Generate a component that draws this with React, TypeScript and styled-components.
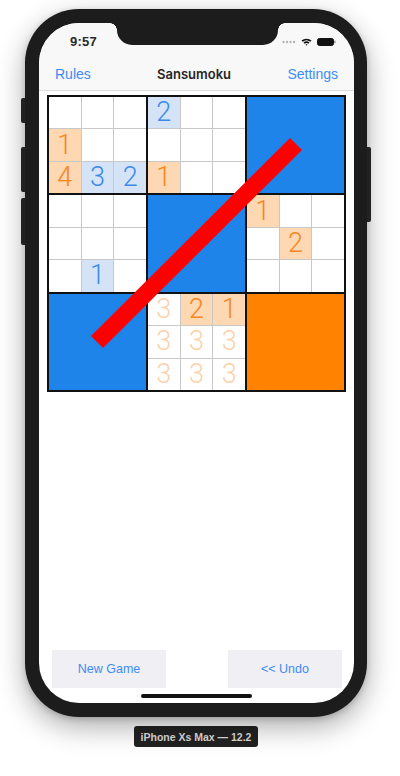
import React from 'react';
import styled, { createGlobalStyle } from 'styled-components';

const GlobalStyle = createGlobalStyle`
  html, body {
    margin: 0;
    padding: 0;
    background: #ffffff;
    font-family: "Liberation Sans", "Noto Sans", Arial, sans-serif;
  }
`;

const Stage = styled.div`
  width: 400px;
  height: 776px;
  padding: 9px 0 0 25px;
  box-sizing: border-box;
  overflow: hidden;
`;

const Device = styled.div`
  width: 342px;
  display: flex;
  flex-direction: column;
  align-items: center;
`;

const Phone = styled.div`
  position: relative;
  width: 342px;
  height: 708px;
  box-sizing: border-box;
  padding: 14px 13px 14px 14px;
  background: #1c1c1c;
  border-radius: 54px;
  box-shadow: 0 10px 28px rgba(0, 0, 0, 0.32), 0 2px 6px rgba(0, 0, 0, 0.18);
`;

const SideButton = styled.div<{ $side: 'left' | 'right'; $top: number; $height: number }>`
  position: absolute;
  top: ${p => p.$top}px;
  height: ${p => p.$height}px;
  width: 4px;
  background: #222;
  ${p => (p.$side === 'left' ? 'left: -4px; border-radius: 2px 0 0 2px;' : 'right: -4px; border-radius: 0 2px 2px 0;')}
`;

const Screen = styled.div`
  position: relative;
  width: 100%;
  height: 100%;
  border-radius: 40px;
  overflow: hidden;
  background: #ffffff;
  display: flex;
  flex-direction: column;
`;

const Notch = styled.div`
  position: absolute;
  top: 0;
  left: 78px;
  width: 161px;
  height: 22px;
  background: #1c1c1c;
  border-radius: 0 0 15px 15px;

  &::before,
  &::after {
    content: '';
    position: absolute;
    top: 0;
    width: 7px;
    height: 7px;
  }
  &::before {
    left: -7px;
    background: radial-gradient(circle at 0 100%, transparent 6.5px, #1c1c1c 7px);
  }
  &::after {
    right: -7px;
    background: radial-gradient(circle at 100% 100%, transparent 6.5px, #1c1c1c 7px);
  }
`;

const Header = styled.div`
  background: #f8f8f8;
  border-bottom: 1px solid #dedede;
  height: 67px;
  display: flex;
  flex-direction: column;
`;

const StatusBar = styled.div`
  height: 36px;
  display: flex;
  align-items: center;
  justify-content: space-between;
  padding: 0 18px 0 31px;
  box-sizing: border-box;
`;

const Clock = styled.span`
  font-size: 13px;
  font-weight: 700;
  color: #2a2a2a;
  letter-spacing: 0.2px;
`;

const StatusIcons = styled.div`
  display: flex;
  align-items: center;
  gap: 5px;
  padding-top: 2px;
`;

const NavBar = styled.div`
  flex: 1;
  display: flex;
  align-items: center;
  justify-content: space-between;
  padding: 0 16px 2px 16px;
`;

const NavLink = styled.span`
  font-size: 14px;
  color: #3d8cf5;
`;

const NavTitle = styled.span`
  font-family: Inter, "Noto Sans", sans-serif;
  font-size: 13px;
  font-weight: 600;
  color: #262626;
  margin-left: 10px;
`;

const Board = styled.div`
  position: relative;
  margin: 4px 0 0 8px;
  width: 299px;
  height: 297px;
  box-sizing: border-box;
  padding: 2px;
  background: #111;
  display: grid;
  grid-template-columns: repeat(3, 1fr);
  grid-template-rows: repeat(3, 1fr);
  gap: 2px;
`;

const Block = styled.div<{ $fill?: string }>`
  background: ${p => p.$fill || '#c8c8c8'};
  display: grid;
  grid-template-columns: repeat(3, 1fr);
  grid-template-rows: repeat(3, 1fr);
  gap: 1px;
`;

type Tone = 'none' | 'orange' | 'blue' | 'faint';

const cellBg: Record<Tone, string> = {
  none: '#ffffff',
  orange: '#fed8b3',
  blue: '#d4e4f6',
  faint: '#ffffff',
};

const cellInk: Record<Tone, string> = {
  none: '#000',
  orange: '#f7861d',
  blue: '#3c8ae9',
  faint: '#fdd1aa',
};

const Cell = styled.div<{ $tone: Tone }>`
  background: ${p => cellBg[p.$tone]};
  color: ${p => cellInk[p.$tone]};
  display: flex;
  align-items: center;
  justify-content: center;
  font-family: Roboto, "Open Sans", sans-serif;
  font-weight: 300;
  font-size: 27px;
  line-height: 1;
`;

const Slash = styled.svg`
  position: absolute;
  left: 0;
  top: 0;
  pointer-events: none;
`;

const Spacer = styled.div`
  flex: 1;
`;

const Footer = styled.div`
  display: flex;
  flex-direction: column;
  align-items: center;
  padding-bottom: 5px;
`;

const ButtonRow = styled.div`
  width: 100%;
  box-sizing: border-box;
  display: flex;
  justify-content: space-between;
  padding: 0 12px 0 13px;
`;

const ActionButton = styled.div`
  width: 114px;
  height: 38px;
  background: #efeff4;
  color: #3d8cf5;
  font-size: 12.5px;
  display: flex;
  align-items: center;
  justify-content: center;
`;

const HomeIndicator = styled.div`
  margin-top: 6px;
  width: 111px;
  height: 4px;
  border-radius: 2px;
  background: #111;
`;

const DeviceLabel = styled.div`
  margin-top: 9px;
  height: 21px;
  padding: 0 7px;
  display: flex;
  align-items: center;
  background: #222;
  border-radius: 3px;
  color: #dcdcdc;
  font-size: 10.5px;
  font-weight: 700;
`;

type CellSpec = [Tone, string];
const E: CellSpec = ['none', ''];

const blocks: (CellSpec[] | string)[] = [
  [E, E, E, ['orange', '1'], E, E, ['orange', '4'], ['blue', '3'], ['blue', '2']],
  [['blue', '2'], E, E, E, E, E, ['orange', '1'], E, E],
  '#1f84ea',
  [E, E, E, E, E, E, E, ['blue', '1'], E],
  '#1f84ea',
  [['orange', '1'], E, E, E, ['orange', '2'], E, E, E, E],
  '#1f84ea',
  [
    ['faint', '3'], ['orange', '2'], ['orange', '1'],
    ['faint', '3'], ['faint', '3'], ['faint', '3'],
    ['faint', '3'], ['faint', '3'], ['faint', '3'],
  ],
  '#ff8300',
];

const Dots = () => (
  <svg width="14" height="4" viewBox="0 0 14 4">
    {[1.5, 5, 8.5, 12].map(x => (
      <circle key={x} cx={x} cy="2" r="1.2" fill="#b5b5b5" />
    ))}
  </svg>
);

const Wifi = () => (
  <svg width="11" height="8" viewBox="0 0 11 8">
    <path d="M0.5 2.6 A7.5 7.5 0 0 1 10.5 2.6 L9.3 3.8 A5.8 5.8 0 0 0 1.7 3.8 Z" fill="#111" />
    <path d="M2.5 4.6 A4.6 4.6 0 0 1 8.5 4.6 L7.3 5.8 A2.9 2.9 0 0 0 3.7 5.8 Z" fill="#111" />
    <path d="M4.5 6.6 A1.5 1.5 0 0 1 6.5 6.6 L5.5 7.7 Z" fill="#111" />
  </svg>
);

const Battery = () => (
  <svg width="19" height="8" viewBox="0 0 19 8">
    <rect x="0.5" y="0.5" width="16" height="7" rx="2" fill="#111" stroke="#111" />
    <rect x="17.2" y="2.6" width="1.4" height="2.8" rx="0.6" fill="#999" />
  </svg>
);

export default function App() {
  return (
    <>
      <GlobalStyle />
      <Stage>
        <Device>
          <Phone>
            <SideButton $side="left" $top={89} $height={25} />
            <SideButton $side="left" $top={138} $height={45} />
            <SideButton $side="left" $top={189} $height={47} />
            <SideButton $side="right" $top={138} $height={75} />
            <Screen>
              <Header>
                <StatusBar>
                  <Clock>9:57</Clock>
                  <StatusIcons>
                    <Dots />
                    <Wifi />
                    <Battery />
                  </StatusIcons>
                </StatusBar>
                <NavBar>
                  <NavLink>Rules</NavLink>
                  <NavTitle>Sansumoku</NavTitle>
                  <NavLink>Settings</NavLink>
                </NavBar>
              </Header>
              <Notch />
              <Board>
                {blocks.map((b, i) =>
                  typeof b === 'string' ? (
                    <Block key={i} $fill={b} />
                  ) : (
                    <Block key={i}>
                      {b.map(([tone, text], j) => (
                        <Cell key={j} $tone={tone}>
                          {text}
                        </Cell>
                      ))}
                    </Block>
                  )
                )}
                <Slash width="299" height="297" viewBox="0 0 299 297">
                  <line x1="50" y1="247" x2="249" y2="49" stroke="#ff0000" strokeWidth="17" />
                </Slash>
              </Board>
              <Spacer />
              <Footer>
                <ButtonRow>
                  <ActionButton>New Game</ActionButton>
                  <ActionButton>&lt;&lt; Undo</ActionButton>
                </ButtonRow>
                <HomeIndicator />
              </Footer>
            </Screen>
          </Phone>
          <DeviceLabel>iPhone Xs Max — 12.2</DeviceLabel>
        </Device>
      </Stage>
    </>
  );
}
